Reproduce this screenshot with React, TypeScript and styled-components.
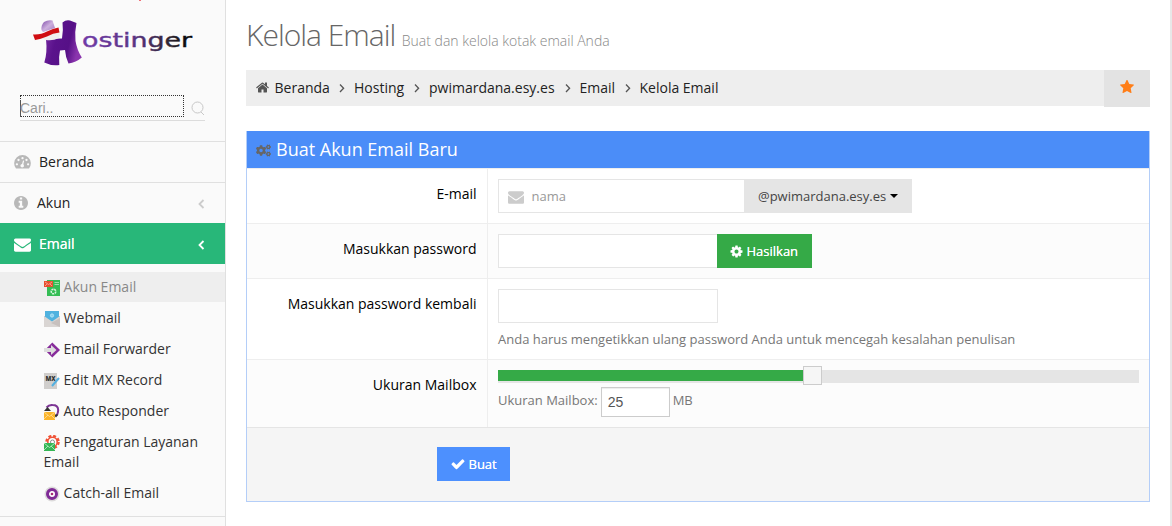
import React from "react";
import styled, { createGlobalStyle, css } from "styled-components";
import { FaCogs } from "react-icons/fa";

const GlobalStyle = createGlobalStyle`
  * { box-sizing: border-box; }
  body {
    margin: 0;
    background: #fff;
    color: #000;
    font: 14px/20px "Open Sans", sans-serif;
  }
  svg { display: block; flex: none; }
`;

const Page = styled.div`
  display: flex;
  width: 1172px;
  height: 526px;
  overflow: hidden;
  border-right: 2px solid #e8e8e8;
`;

const Sidebar = styled.aside`
  position: relative;
  flex: none;
  width: 226px;
  background: #fafafa;
  border-right: 1px solid #e0e0e0;
`;

const FlagSpeck = styled.i`
  position: absolute;
  left: 139px;
  top: 0;
  width: 2px;
  height: 1px;
  background: #f07078;
`;

const LogoArea = styled.div`
  height: 95px;
  padding: 14px 0 0 28px;
`;

const SearchBar = styled.div`
  display: flex;
  justify-content: space-between;
  width: 185px;
  height: 26px;
  margin: 0 0 20px 20px;
  border-bottom: 1px solid #dcdcdc;
`;

const SearchField = styled.div`
  width: 164px;
  height: 22px;
  border: 1px dotted #333;
  color: #999;
  font: 14px/23px "Liberation Sans", Arial, sans-serif;
`;

const SearchText = styled.span`
  display: block;
  height: 17px;
  margin: 4px 0 0 -1px;
  border-left: 1px solid #555;
  line-height: 16px;
  text-indent: -1px;
`;

const SearchIcon = styled.svg`
  margin-top: 6px;
`;

const MenuItem = styled.div<{ $active?: boolean; $gap: number }>`
  display: flex;
  align-items: center;
  gap: ${(p) => p.$gap}px;
  height: 41px;
  padding: 0 20px 0 14px;
  border-top: 1px solid #e0e0e0;
  color: #222;
  svg:first-child { color: #b8b8b8; }
  ${(p) =>
    p.$active &&
    css`
      background: #28b779;
      border-color: #28b779;
      color: #fff;
      text-shadow: 0 0 0.6px #fff;
      svg:first-child { color: #fff; }
    `}
`;

const Chevron = styled.svg`
  margin: 2px 0 0 auto;
`;

const SubMenu = styled.div`
  padding: 8px 0 7px;
  border-bottom: 1px solid #e0e0e0;
`;

const SubItem = styled.div<{ $active?: boolean }>`
  padding: 5px 20px 5px 43.600px;
  margin-bottom: 1px;
  color: ${(p) => (p.$active ? "#888" : "#333")};
  background: ${(p) => (p.$active ? "#eee" : "transparent")};
  svg { display: inline-block; vertical-align: -4px; margin-right: 4px; }
`;

const Content = styled.main`
  width: 904px;
  margin-left: 20px;
`;

const Title = styled.h1`
  height: 70px;
  margin: 0;
  padding-top: 15px;
  color: #666;
  font-size: 30px;
  line-height: 40px;
  font-weight: 300;
  letter-spacing: -1px;
  white-space: nowrap;
  small { margin-left: 6.500px; color: #888; font-size: 14px; letter-spacing: 0; }
`;

const Breadcrumb = styled.nav`
  display: flex;
  height: 36px;
  padding-left: 10px;
  background: #eee;
  color: #222;
  line-height: 35px;
`;

const HomeIcon = styled.svg`
  margin: 11px 5.500px 0 0;
`;

const Crumb = styled.span<{ $w: number }>`
  width: ${(p) => p.$w}px;
  white-space: nowrap;
`;

const Separator = styled.svg`
  margin: 13px 9px 0 0;
`;

const Favorite = styled.div`
  width: 46px;
  height: 37px;
  margin-left: auto;
  padding: 10px 0 0 16px;
  background: #e3e3e3;
  color: #ff7e18;
`;

const Panel = styled.section`
  margin-top: 25px;
  border: 1px solid #b4cef8;
  border-top: 0;
`;

const PanelHeader = styled.header`
  display: flex;
  align-items: center;
  gap: 5px;
  height: 37px;
  padding: 0 0 1px 9px;
  background: #4b8df8;
  color: #fff;
  font-size: 18px;
  svg { color: #666; margin-top: 2px; }
`;

const Row = styled.div<{ $h: number; $alt?: boolean }>`
  display: flex;
  height: ${(p) => p.$h}px;
  border-top: 1px solid #eee;
  background: ${(p) => (p.$alt ? "#fcfcfc" : "#fff")};
`;

const Label = styled.div`
  width: 241px;
  padding: 15px 10.500px 0 0;
  border-right: 1px solid #eee;
  text-align: right;
`;

const Controls = styled.div`
  flex: 1;
  padding: 10px 10px 0;
  color: #777;
  font-size: 13px;
`;

const Line = styled.div`
  display: flex;
`;

const Field = styled.div<{ $w: number; $joined?: boolean }>`
  display: flex;
  align-items: center;
  gap: 7.500px;
  width: ${(p) => p.$w}px;
  height: 34px;
  padding-left: 9px;
  border: 1px solid #e5e5e5;
  border-right-width: ${(p) => (p.$joined ? 0 : 1)}px;
  background: #fff;
  color: #999;
  svg { color: #ccc; margin-top: 1px; }
`;

const Button = styled.div<{ $tone: "gray" | "green" | "blue"; $w: number }>`
  display: flex;
  align-items: center;
  gap: 3.500px;
  width: ${(p) => p.$w}px;
  height: 34px;
  padding-left: ${(p) => (p.$tone === "green" ? 13 : 14)}px;
  background: ${(p) => ({ gray: "#e5e5e5", green: "#35aa47", blue: "#4d90fe" })[p.$tone]};
  color: ${(p) => (p.$tone === "gray" ? "#444" : "#fff")};
  font-size: 13px;
  text-shadow: ${(p) => (p.$tone === "gray" ? "none" : "0 0 0.6px #fff")};
  white-space: nowrap;
`;

const Caret = styled.i`
  border: 4px solid transparent;
  border-top-color: #000;
  border-bottom: 0;
`;

const Hint = styled.div`
  margin-top: 6px;
  white-space: nowrap;
`;

const Slider = styled.div`
  display: flex;
  width: 641px;
  height: 13px;
  background: #e5e5e5;
`;

const SliderFill = styled.div`
  width: 305px;
  height: 11px;
  background: #35aa47;
`;

const SliderThumb = styled.div`
  width: 19px;
  height: 19px;
  margin-top: -4px;
  background: #f6f6f6;
  border: 1px solid #ccc;
`;

const SizeLine = styled.div`
  display: flex;
  margin-top: 4px;
  line-height: 27px;
`;

const SizeInput = styled.div`
  width: 69px;
  height: 30px;
  margin: 0 3px;
  padding-left: 6px;
  border: 1px solid #ccc;
  background: #fff;
  color: #555;
  font: 14px/29px "Liberation Sans", Arial, sans-serif;
  box-shadow: inset 0 1px 1px rgba(0, 0, 0, 0.075);
`;

const Footer = styled.footer`
  height: 74px;
  padding: 19px 0 0 190px;
  border-top: 1px solid #e5e5e5;
  background: #f5f5f5;
`;

const shapes = {
  envelope:
    "M1792 710v794q0 66-47 113t-113 47h-1472q-66 0-113-47t-47-113v-794q44 49 101 87 362 246 497 345 57 42 92.5 65.5t94.5 48 110 24.5h2q51 0 110-24.5t94.5-48 92.5-65.5q170-123 498-345 57-39 100-87zm0-294q0 79-49 151t-122 123q-376 261-468 325-10 7-42.5 31t-54 38.5-52 32.5-57.5 27-50 9h-2q-23 0-50-9t-57.5-27-52-32.5-54-38.5-42.5-31q-91-64-262-182.5t-205-142.5q-62-42-117-115.5t-55-136.5q0-78 41.5-130t118.5-52h1472q65 0 112.5 47t47.5 113z",
  home: "M1472 992v480q0 26-19 45t-45 19h-384v-384h-256v384h-384q-26 0-45-19t-19-45v-480q0-1 .5-3t.5-3l575-474 575 474q1 2 1 6zm223-69l-62 74q-8 9-21 11h-3q-13 0-21-7l-692-577-692 577q-12 8-24 7-13-2-21-11l-62-74q-8-10-7-23.5t11-21.5l719-599q32-26 76-26t76 26l244 204v-195q0-14 9-23t23-9h192q14 0 23 9t9 23v408l219 182q10 8 11 21.5t-7 23.5z",
  star: "M1728 647q0 22-26 48l-363 354 86 500q1 7 1 20 0 21-10.5 35.5t-30.5 14.5q-19 0-40-12l-449-236-449 236q-22 12-40 12-21 0-31.5-14.5t-10.5-35.5q0-6 2-20l86-500-364-354q-25-27-25-48 0-37 56-46l502-73 225-455q19-41 49-41t49 41l225 455 502 73q56 9 56 46z",
  check:
    "M1671 566q0 40-28 68l-724 724-136 136q-28 28-68 28t-68-28l-136-136-362-362q-28-28-28-68t28-68l136-136q28-28 68-28t68 28l294 295 656-657q28-28 68-28t68 28l136 136q28 28 28 68z",
  cog: "M1152 896q0-106-75-181t-181-75-181 75-75 181 75 181 181 75 181-75 75-181zm512-109v222q0 12-8 23t-20 13l-185 28q-19 54-39 91 35 50 107 138 10 12 10 25t-9 23q-27 37-99 108t-94 71q-12 0-26-9l-138-108q-44 23-91 38-16 136-29 186-7 28-36 28h-222q-14 0-24.5-8.5t-11.5-21.5l-28-184q-49-16-90-37l-141 107q-10 9-25 9-14 0-25-11-126-114-165-168-7-10-7-23 0-12 8-23 15-21 51-66.5t54-70.5q-27-50-41-99l-183-27q-13-2-21-12.5t-8-23.5v-222q0-12 8-23t19-13l186-28q14-46 39-92-40-57-107-138-10-12-10-24 0-10 9-23 26-36 98.5-107.5t94.5-71.5q13 0 26 10l138 107q44-23 91-38 16-136 29-186 7-28 36-28h222q14 0 24.5 8.5t11.5 21.5l28 184q49 16 90 37l142-107q9-9 24-9 13 0 25 10 129 119 165 170 7 8 7 22 0 12-8 23-15 21-51 66.5t-54 70.5q26 50 41 98l183 28q13 2 21 12.5t8 23.5z",
  info: "M1152 1376v-160q0-14-9-23t-23-9h-96v-512q0-14-9-23t-23-9h-320q-14 0-23 9t-9 23v160q0 14 9 23t23 9h96v320h-96q-14 0-23 9t-9 23v160q0 14 9 23t23 9h448q14 0 23-9t9-23zm-128-896v-160q0-14-9-23t-23-9h-192q-14 0-23 9t-9 23v160q0 14 9 23t23 9h192q14 0 23-9t9-23zm640 416q0 209-103 385.5t-279.5 279.5-385.5 103-385.5-103-279.5-279.5-103-385.5 103-385.5 279.5-279.5 385.5-103 385.5 103 279.5 279.5 103 385.5z",
};

const boxes: Record<string, string> = {
  envelope: "0 0 1792 1792",
  info: "128 128 1536 1536",
};

const Icon = ({ name, size = 14 }: { name: keyof typeof shapes; size?: number }) => (
  <svg width={size} height={size} viewBox={boxes[name] ?? "64 64 1664 1664"} fill="currentColor">
    <path d={shapes[name]} />
  </svg>
);

const Gauge = () => (
  <svg width="17" height="14" viewBox="0 0 17 14">
    <path d="M2 13.500A8.300 8.300 0 1 1 15 13.500z" fill="currentColor" />
    <g fill="#fafafa">
      <circle cx="2.900" cy="9.300" r="1.150" />
      <circle cx="4.500" cy="5" r="1.150" />
      <circle cx="8.500" cy="3.200" r="1.150" />
      <circle cx="12.500" cy="5" r="1.150" />
      <circle cx="14.100" cy="9.300" r="1.150" />
      <circle cx="8.200" cy="10.800" r="1.800" />
    </g>
    <path d="M8.300 10.500 9.500 6" stroke="#fafafa" strokeWidth="1.200" strokeLinecap="round" />
  </svg>
);

const Collapse = ({ color }: { color: string }) => (
  <Chevron width="7" height="10" viewBox="0 0 7 10" fill="none" stroke={color} strokeWidth="1.800">
    <path d="M5.500 1 1.500 5l4 4" />
  </Chevron>
);

const Next = () => (
  <Separator width="6" height="10" viewBox="0 0 6 10" fill="none" stroke="#555" strokeWidth="1.300">
    <path d="M1 1.500 4.600 5.200 1 9" />
  </Separator>
);

const Logo = () => (
  <svg width="170" height="56" viewBox="28 14 170 56">
    <defs>
      <linearGradient id="word" x1="83" x2="192" y1="0" y2="0" gradientUnits="userSpaceOnUse">
        <stop offset="0" stopColor="#6f3aa6" />
        <stop offset=".45" stopColor="#5c3587" />
        <stop offset=".8" stopColor="#2d2430" />
        <stop offset="1" stopColor="#000" />
      </linearGradient>
      <linearGradient id="body" x1="0" x2="1" y1="0" y2=".3">
        <stop offset="0" stopColor="#7d2fa8" />
        <stop offset=".4" stopColor="#5a128c" />
        <stop offset=".75" stopColor="#561087" />
        <stop offset="1" stopColor="#8a35ad" />
      </linearGradient>
      <linearGradient id="cap" x1="0" x2="1" y1="0" y2="1">
        <stop offset="0" stopColor="#7d4aa8" />
        <stop offset=".5" stopColor="#cdb0de" />
        <stop offset="1" stopColor="#a077bd" />
      </linearGradient>
    </defs>
    <path
      d="M62.500 22.500Q66 19.500 70 20.500L76.500 23Q74.500 32 75.500 41Q77 50 81.800 57.500Q76 62.500 68.500 63.500Q65.500 57 65 50L60 50.500Q58.500 57 59.300 65Q51 66 44.300 62.500Q47.500 53 46 39L62 38.500Q63.500 30 62.500 22.500z"
      fill="url(#body)"
    />
    <path d="M41.500 30Q41 25 44 22Q48 19.500 52.500 20.500L55 28L43 32z" fill="url(#cap)" />
    <path d="M34 41Q37 37 44 35L59 30Q60.500 35 59 38Q53 41 46 40Q40 37 34 41z" fill="#f0eeee" />
    <path d="M33 34.500Q41 35 47 31.500Q53 28.500 58.500 27.500L59.500 32.500Q53 33 47 36.500Q41 39 35 40z" fill="#d00d12" />
    <text
      x="82"
      y="47"
      fill="url(#word)"
      stroke="url(#word)"
      strokeWidth=".4"
      fontFamily="DejaVu Sans"
      fontSize="20"
      textLength="110"
      lengthAdjust="spacingAndGlyphs"
    >
      ostinger
    </text>
  </svg>
);

const SmallIcon = ({ children }: { children: React.ReactNode }) => (
  <svg width="16" height="16" viewBox="0 0 16 16">
    {children}
  </svg>
);

const AccountIcon = () => (
  <SmallIcon>
    <path d="M3 0h13v16H3z" fill="#35bd55" />
    <path d="M10.500 2.500H15m-4.500 2H15" stroke="#9be0a9" />
    <path d="M0 1h9v6H0z" fill="#e8502f" />
    <path d="m1 2 3.500 2.500L8 2M1 6l2-2m5 2L6 4" stroke="#f7b5a5" fill="none" strokeWidth=".8" />
    <circle cx="9.500" cy="11.500" r="2.300" fill="none" stroke="#d5f5dc" strokeWidth="1.500" strokeDasharray="2 .6" />
  </SmallIcon>
);
const WebmailIcon = () => (
  <SmallIcon>
    <path d="M0 5h16v11H0z" fill="#d9d5d3" />
    <path d="m16 7-9 5 9 4z" fill="#c7c0be" />
    <path d="M1 0h14v6l1-1-8 5.500L0 5l1 1z" fill="#50b2df" />
    <circle cx="8" cy="4.500" r="1.600" fill="#88d0ef" stroke="#b5e4f7" />
  </SmallIcon>
);
const ForwardIcon = () => (
  <SmallIcon>
    <path d="M8.300.500 16 8l-7.700 7.500L.8 8z" fill="#872d9b" />
    <path d="M0 6h7V3l5.500 5L7 13v-3H0z" fill="#ddd" />
  </SmallIcon>
);
const MxIcon = () => (
  <SmallIcon>
    <path d="M0 0h13v16H0z" fill="#d0cecc" />
    <text x="1.500" y="8" fontFamily="Open Sans" fontSize="6" fontWeight="800" fill="#333">
      MX
    </text>
    <path d="m8 13 7-8" stroke="#54b0e0" strokeWidth="2" />
  </SmallIcon>
);
const ResponderIcon = () => (
  <SmallIcon>
    <path d="M2.500 3.500Q5 .8 8.500 1 14 1 14.200 6q0 3-1.700 5.500" stroke="#7c3594" strokeWidth="2" fill="none" />
    <path d="m0 7 3.500-4L7 7zM9.500 10.500h5l-2.500 3z" fill="#333" />
    <path d="M0 8h11v8H0z" fill="#fbb52b" />
    <path d="m0 8 5.500 4.500L11 8M0 15l4-4m7 4-4-4" stroke="#ffe0a0" fill="none" strokeWidth=".8" />
  </SmallIcon>
);
const ServiceIcon = () => (
  <SmallIcon>
    <circle cx="8.500" cy="7" r="6" fill="none" stroke="#f05236" strokeWidth="2.500" strokeDasharray="2.900 1.800" />
    <circle cx="8.500" cy="7" r="4.700" fill="#fff" stroke="#f05236" strokeWidth="1.600" />
    <circle cx="8.500" cy="7" r="2" fill="none" stroke="#888" />
    <path d="M0 8h11v8H0z" fill="#35b655" />
    <path d="m0 8 5.500 4.500L11 8M0 15l4-4m7 4-4-4" stroke="#c5efcf" fill="none" strokeWidth=".8" />
  </SmallIcon>
);
const CatchIcon = () => (
  <SmallIcon>
    <circle cx="8" cy="8" r="7.500" fill="#dcdadb" />
    <circle cx="8" cy="8" r="4.500" fill="#fff" stroke="#7f2b96" strokeWidth="3" />
    <circle cx="8" cy="8" r="1.300" fill="#a52b77" />
  </SmallIcon>
);

const subItems = [
  { icon: AccountIcon, text: "Akun Email", active: true },
  { icon: WebmailIcon, text: "Webmail" },
  { icon: ForwardIcon, text: "Email Forwarder" },
  { icon: MxIcon, text: "Edit MX Record" },
  { icon: ResponderIcon, text: "Auto Responder" },
  { icon: ServiceIcon, text: "Pengaturan Layanan Email" },
  { icon: CatchIcon, text: "Catch-all Email" },
];

const crumbs = [
  { text: "Hosting", w: 60 },
  { text: "pwimardana.esy.es", w: 135.5 },
  { text: "Email", w: 45 },
  { text: "Kelola Email", w: 90 },
];

export default function App() {
  return (
    <>
      <GlobalStyle />
      <Page>
        <Sidebar>
          <FlagSpeck />
          <LogoArea>
            <Logo />
          </LogoArea>
          <SearchBar>
            <SearchField>
              <SearchText>Cari..</SearchText>
            </SearchField>
            <SearchIcon width="14" height="15" viewBox="0 0 14 15" fill="none" stroke="#c8c8c8">
              <circle cx="6.500" cy="6.500" r="5.500" />
              <path d="m10 11 3 3" />
            </SearchIcon>
          </SearchBar>
          <MenuItem $gap={8}>
            <Gauge />
            Beranda
          </MenuItem>
          <MenuItem $gap={9}>
            <Icon name="info" />
            Akun
            <Collapse color="#ccc" />
          </MenuItem>
          <MenuItem $gap={8} $active>
            <Icon name="envelope" size={17} />
            Email
            <Collapse color="#fff" />
          </MenuItem>
          <SubMenu>
            {subItems.map(({ icon: Glyph, text, active }) => (
              <SubItem key={text} $active={active}>
                <Glyph />
                {text}
              </SubItem>
            ))}
          </SubMenu>
        </Sidebar>
        <Content>
          <Title>
            Kelola Email
            <small>Buat dan kelola kotak email Anda</small>
          </Title>
          <Breadcrumb>
            <HomeIcon width="13" height="13" viewBox="64 128 1664 1536" fill="#555">
              <path d={shapes.home} />
            </HomeIcon>
            <Crumb $w={64.5}>Beranda</Crumb>
            {crumbs.map(({ text, w }) => (
              <React.Fragment key={text}>
                <Next />
                <Crumb $w={w}>{text}</Crumb>
              </React.Fragment>
            ))}
            <Favorite>
              <Icon name="star" size={14} />
            </Favorite>
          </Breadcrumb>
          <Panel>
            <PanelHeader>
              <FaCogs size={15} />
              Buat Akun Email Baru
            </PanelHeader>
            <Row $h={55}>
              <Label>E-mail</Label>
              <Controls>
                <Line>
                  <Field $w={246} $joined>
                    <Icon name="envelope" size={16} />
                    nama
                  </Field>
                  <Button $tone="gray" $w={168}>
                    @pwimardana.esy.es
                    <Caret />
                  </Button>
                </Line>
              </Controls>
            </Row>
            <Row $h={55} $alt>
              <Label>Masukkan password</Label>
              <Controls>
                <Line>
                  <Field $w={219} $joined />
                  <Button $tone="green" $w={95}>
                    <Icon name="cog" size={13} />
                    Hasilkan
                  </Button>
                </Line>
              </Controls>
            </Row>
            <Row $h={81}>
              <Label>Masukkan password kembali</Label>
              <Controls>
                <Field $w={220} />
                <Hint>Anda harus mengetikkan ulang password Anda untuk mencegah kesalahan penulisan</Hint>
              </Controls>
            </Row>
            <Row $h={68} $alt>
              <Label>Ukuran Mailbox</Label>
              <Controls>
                <Slider>
                  <SliderFill />
                  <SliderThumb />
                </Slider>
                <SizeLine>
                  Ukuran Mailbox:
                  <SizeInput>25</SizeInput>
                  MB
                </SizeLine>
              </Controls>
            </Row>
            <Footer>
              <Button $tone="blue" $w={73}>
                <Icon name="check" size={14} />
                Buat
              </Button>
            </Footer>
          </Panel>
        </Content>
      </Page>
    </>
  );
}
